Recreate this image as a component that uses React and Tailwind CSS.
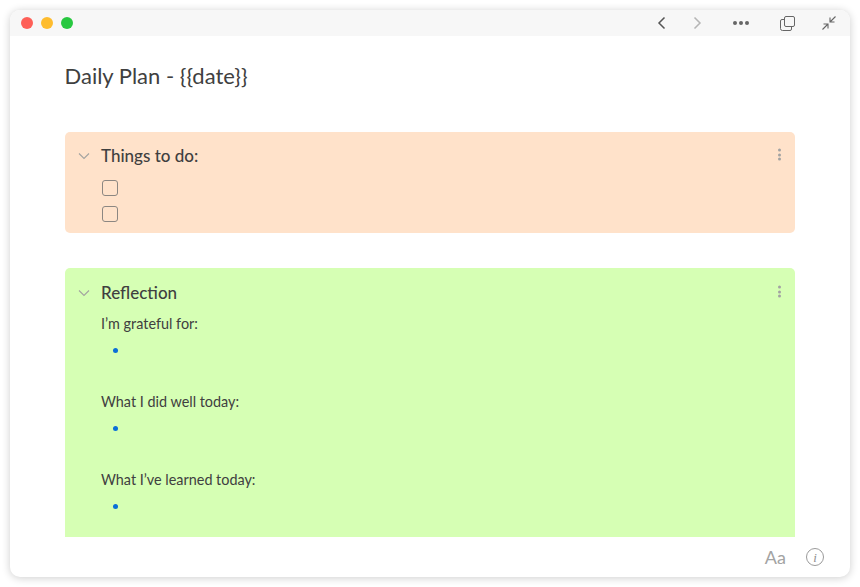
import React from 'react';

const font = { fontFamily: 'Lato, "Noto Sans", sans-serif' };

function Chevron() {
  return (
    <svg width="12" height="8" viewBox="0 0 12 8" fill="none" stroke="#a3a3a0" strokeWidth="1.1" className="shrink-0">
      <path d="M1 1.5 L6 6.5 L11 1.5" />
    </svg>
  );
}

function Kebab() {
  return (
    <div className="flex flex-col gap-[1.7px] -translate-y-[1.5px]">
      <span className="w-[3px] h-[3px] rounded-full bg-[#a2a2a2]" />
      <span className="w-[3px] h-[3px] rounded-full bg-[#a2a2a2]" />
      <span className="w-[3px] h-[3px] rounded-full bg-[#a2a2a2]" />
    </div>
  );
}

function BlockHeader({ title }) {
  return (
    <div className="flex items-center h-[24px]">
      <div className="w-[36.5px] pl-[13px] flex items-center"><Chevron /></div>
      <div className="flex-1 text-[17px] leading-[24px] font-medium text-[#3f3f3f]">{title}</div>
      <div className="pr-[14px]"><Kebab /></div>
    </div>
  );
}

function Checkbox() {
  return <div className="w-[16px] h-[16px] rounded-[3px] border border-[#8c8782]" />;
}

function Prompt({ text }) {
  return (
    <div className="h-[78px]">
      <div className="text-[14.4px] leading-[20px] text-[#404040]">{text}</div>
      <div className="mt-[13.5px] ml-[12px] w-[5px] h-[5px] rounded-full bg-[#0a6fd8]" />
    </div>
  );
}

export default function App() {
  return (
    <div className="w-[860px] h-[587px] bg-white p-[10px] overflow-hidden" style={font}>
      <div className="h-[567px] flex flex-col rounded-[10px] bg-white overflow-hidden shadow-[0_1px_9px_rgba(0,0,0,0.2)]">
        {/* Title bar */}
        <div className="h-[26px] shrink-0 bg-[#f7f7f7] flex items-center pl-[11px] pr-[14px]">
          <div className="flex gap-[8px]">
            <span className="w-[12px] h-[12px] rounded-full bg-[#fe5f57]" />
            <span className="w-[12px] h-[12px] rounded-full bg-[#febc2e]" />
            <span className="w-[12px] h-[12px] rounded-full bg-[#28c840]" />
          </div>
          <div className="ml-auto flex items-center">
            <svg width="10" height="14" viewBox="0 0 10 14" fill="none" stroke="#555" strokeWidth="1.5" className="mr-[25px]">
              <path d="M7.5 1.5 L2 7 L7.5 12.5" />
            </svg>
            <svg width="10" height="14" viewBox="0 0 10 14" fill="none" stroke="#b5b5b5" strokeWidth="1.5" className="mr-[31px]">
              <path d="M2.5 1.5 L8 7 L2.5 12.5" />
            </svg>
            <div className="flex gap-[2px] mr-[31px]">
              <span className="w-[4px] h-[4px] rounded-full bg-[#666]" />
              <span className="w-[4px] h-[4px] rounded-full bg-[#666]" />
              <span className="w-[4px] h-[4px] rounded-full bg-[#666]" />
            </div>
            <svg width="15" height="15" viewBox="0 0 15 15" fill="none" stroke="#666" strokeWidth="1" className="mr-[27px]">
              <rect x="4.5" y="0.5" width="10" height="10" rx="1.5" />
              <path d="M4.5 3.5 H2 A1.5 1.5 0 0 0 0.5 5 V12.5 A2 2 0 0 0 2.5 14.5 H10 A1.5 1.5 0 0 0 11.5 13 V10.5" />
            </svg>
            <svg width="14" height="14" viewBox="0 0 14 14" fill="none" stroke="#666" strokeWidth="1.1">
              <path d="M13.5 0.5 L8 6 M8 1.5 V6 H12.5" />
              <path d="M0.5 13.5 L6 8 M1.5 8 H6 V12.5" />
            </svg>
          </div>
        </div>

        {/* Note body */}
        <div className="h-[501px] shrink-0 pl-[54.5px] pr-[55px] overflow-hidden">
          <h1 className="mt-[26px] text-[22px] leading-[28px] text-[#404040]">{'Daily Plan - {{date}}'}</h1>

          <div className="mt-[42px] h-[101px] rounded-[5px] bg-[#ffe2ca] pt-[12px]">
            <BlockHeader title="Things to do:" />
            <div className="mt-[12px] ml-[37px] flex flex-col gap-[10px]">
              <Checkbox />
              <Checkbox />
            </div>
          </div>

          <div className="mt-[35px] h-[269px] rounded-t-[5px] bg-[#d6ffb4] pt-[13px] overflow-hidden">
            <BlockHeader title="Reflection" />
            <div className="mt-[9px] ml-[36.5px]">
              <Prompt text="I’m grateful for:" />
              <Prompt text="What I did well today:" />
              <Prompt text="What I’ve learned today:" />
            </div>
          </div>
        </div>

        {/* Footer */}
        <div className="flex-1 flex items-center justify-end pr-[26px] gap-[20px]">
          <span className="text-[18px] leading-[20px] text-[#a3a3a3]">Aa</span>
          <div className="w-[18px] h-[18px] rounded-full border border-[#9a9a9a] flex items-center justify-center text-[13px] leading-none italic text-[#8f8f8f]" style={{ fontFamily: '"Liberation Serif", serif' }}>i</div>
        </div>
      </div>
    </div>
  );
}
